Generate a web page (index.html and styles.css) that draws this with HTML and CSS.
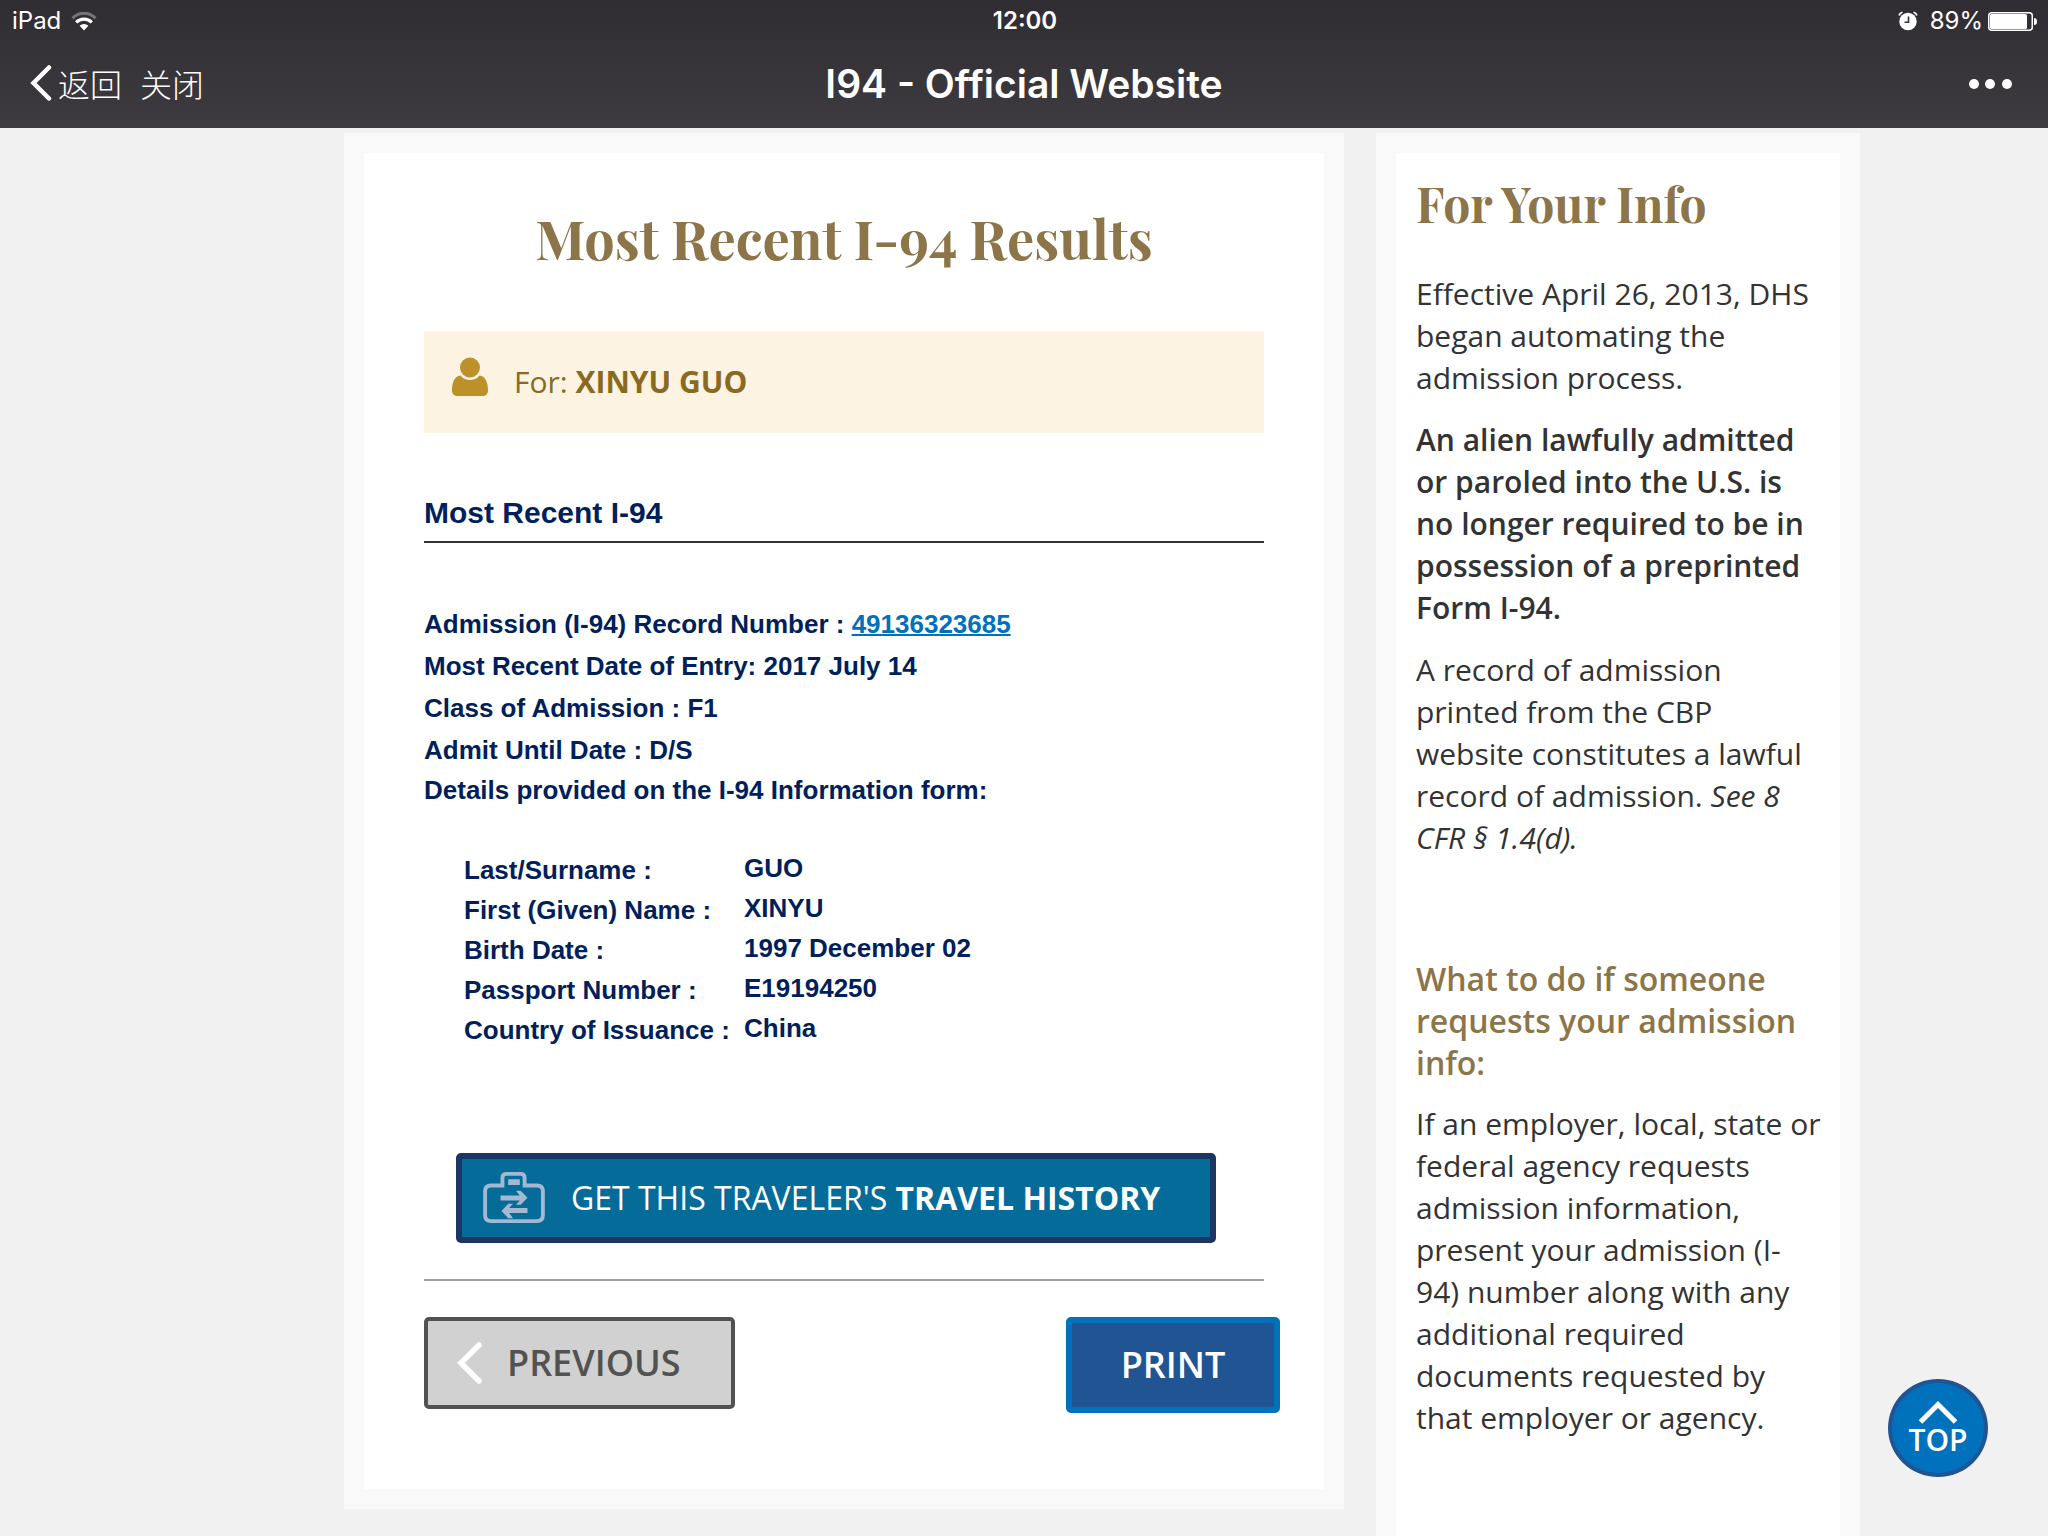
FILE: index.html
```html
<!DOCTYPE html>
<html lang="en">
<head>
<meta charset="utf-8">
<meta name="viewport" content="width=device-width, initial-scale=1">
<title>I94 - Official Website</title>
<link rel="stylesheet" href="styles.css">
</head>
<body>
<header class="topbar">
  <div class="status">
    <div class="status-left">
      <span>iPad</span>
      <svg class="wifi" viewBox="0 0 26 19" aria-hidden="true">
        <path d="M1.500 6.200A16 16 0 0 1 24.500 6.200" fill="none" stroke="#77757a" stroke-width="3"/>
        <path d="M5.200 10.300A11 11 0 0 1 20.800 10.300" fill="none" stroke="#fff" stroke-width="3.200"/>
        <path d="M13 18.500L8.600 13.700A6.500 6.500 0 0 1 17.400 13.700Z" fill="#fff"/>
      </svg>
    </div>
    <span class="clock">12:00</span>
    <div class="status-right">
      <svg class="alarm" viewBox="0 0 20 20" aria-hidden="true">
        <circle cx="10" cy="10.500" r="8.700" fill="#fff"/>
        <path d="M1 4.500A5 5 0 0 1 4.500 1.200M19 4.500A5 5 0 0 0 15.500 1.200" fill="none" stroke="#fff" stroke-width="1.600"/>
        <path d="M10.500 5.500V11.200H6.500" fill="none" stroke="#313035" stroke-width="1.600"/>
      </svg>
      <span>89%</span>
      <svg class="battery" viewBox="0 0 50 20" aria-hidden="true">
        <rect x="0.750" y="1.750" width="43.500" height="17.500" rx="3" fill="none" stroke="#fff" stroke-width="1.500"/>
        <rect x="2" y="3" width="37" height="15" rx="1.500" fill="#fff"/>
        <path d="M46 7a3 3.500 0 0 1 0 7z" fill="#fff"/>
      </svg>
    </div>
  </div>
  <div class="nav">
    <div class="nav-left">
      <button class="nav-button" type="button">
        <svg class="back-icon" viewBox="0 0 22 36" aria-hidden="true"><path d="M19 2.500L3.500 18L19 33.500" fill="none" stroke="#fff" stroke-width="4.500" stroke-linecap="round" stroke-linejoin="miter"/></svg>
        <span lang="zh">返回</span>
      </button>
      <button class="nav-button" type="button" lang="zh">关闭</button>
    </div>
    <span class="nav-title">I94 - Official Website</span>
    <button class="nav-more" type="button" aria-label="More">
      <svg class="dots" viewBox="0 0 44 12" aria-hidden="true"><g fill="#fff"><circle cx="6" cy="6" r="5"/><circle cx="22" cy="6" r="5"/><circle cx="39" cy="6" r="5"/></g></svg>
    </button>
  </div>
</header>

<div class="page">
  <main class="panel panel-main">
    <div class="results">
      <h1 class="results-title">Most Recent I-94 Results</h1>
      <div class="traveler">
        <svg class="person" viewBox="0 0 36 40" aria-hidden="true"><g fill="#bc9129"><ellipse cx="18" cy="10.500" rx="10" ry="10"/><path d="M8.500 18.500C11 22 14.500 23 18 23s7-1 9.500-4.500C33 19 36 25 36 33c0 4-2 6-6 6H6c-4 0-6-2-6-6 0-8 3-14 8.500-14.500Z"/></g></svg>
        <span>For: <strong>XINYU GUO</strong></span>
      </div>
      <h2 class="section-title">Most Recent I-94</h2>
      <div class="record">
        <p>Admission (I-94) Record Number : <a href="#record">49136323685</a></p>
        <p>Most Recent Date of Entry: 2017 July 14</p>
        <p>Class of Admission : F1</p>
        <p>Admit Until Date : D/S</p>
        <p class="record-note">Details provided on the I-94 Information form:</p>
      </div>
      <table class="details">
        <tbody>
          <tr><th scope="row">Last/Surname :</th><td>GUO</td></tr>
          <tr><th scope="row">First (Given) Name :</th><td>XINYU</td></tr>
          <tr><th scope="row">Birth Date :</th><td>1997 December 02</td></tr>
          <tr><th scope="row">Passport Number :</th><td>E19194250</td></tr>
          <tr><th scope="row">Country of Issuance :</th><td>China</td></tr>
        </tbody>
      </table>
      <button class="button button-history" type="button">
        <svg class="suitcase" viewBox="0 0 64 54" aria-hidden="true">
          <path d="M20 14V6Q20 2 24 2H39Q43 2 43 6V14H56Q62 14 62 20V45Q62 51 56 51H8Q2 51 2 45V20Q2 14 8 14Z" fill="none" stroke="#a3b9d1" stroke-width="4"/>
          <path d="M26 7.500H38V13.500H26ZM18 24.500H38L34 19.500H39L46 26.800L39 34H34L38 29.500H18ZM46 37.500H27L31 33H26L19 40.500L26 48H31L27 42.500H46Z" fill="#a3b9d1"/>
        </svg>
        <span>GET THIS TRAVELER'S <strong>TRAVEL HISTORY</strong></span>
      </button>
      <hr class="divider">
      <div class="actions">
        <button class="button button-previous" type="button">
          <svg class="prev-icon" viewBox="0 0 26 42" aria-hidden="true"><path d="M22 3L4 21L22 39" fill="none" stroke="#fff" stroke-width="5.500" stroke-linecap="round"/></svg>
          <span>PREVIOUS</span>
        </button>
        <button class="button button-print" type="button">PRINT</button>
      </div>
    </div>
  </main>

  <aside class="panel">
    <div class="info">
      <h2 class="info-title">For Your Info</h2>
      <p>Effective April 26, 2013, DHS began automating the admission process.</p>
      <p class="info-strong">An alien lawfully admitted or paroled into the U.S. is no longer required to be in possession of a preprinted Form I-94.</p>
      <p>A record of admission printed from the CBP website constitutes a lawful record of admission. <em>See 8 CFR § 1.4(d).</em></p>
      <h3 class="info-subtitle">What to do if someone requests your admission info:</h3>
      <p>If an employer, local, state or federal agency requests admission information, present your admission (I-94) number along with any additional required documents requested by that employer or agency.</p>
    </div>
  </aside>
</div>

<a class="to-top" href="#">
  <svg class="up-icon" viewBox="0 0 40 24" aria-hidden="true"><path d="M2.500 22L20 4.500L37.500 22" fill="none" stroke="#fff" stroke-width="5"/></svg>
  <span>TOP</span>
</a>
</body>
</html>
```
FILE: styles.css
```css
* {
  box-sizing: border-box;
}

body {
  display: flex;
  flex-direction: column;
  min-height: 100vh;
  margin: 0;
  background: #f1f1f1;
  color: #333;
  font: 30px/42px "Open Sans", sans-serif;
}

h1, h2, h3, p {
  margin: 0;
}

button {
  padding: 0;
  border: 0;
  background: none;
  color: inherit;
  font: inherit;
  cursor: pointer;
}

svg {
  display: block;
  flex: none;
}

/* Top bar */
.topbar {
  height: 128px;
  background: linear-gradient(#2f2d32, #3d3b40);
  color: #fff;
  font-family: Inter, "Noto Sans CJK SC", sans-serif;
}

.status,
.nav {
  display: grid;
  grid-template-columns: 1fr auto 1fr;
  align-items: center;
}

.status {
  height: 42px;
  padding: 0 10px 0 12px;
  font-size: 24px;
}

.status-left,
.status-right,
.nav-left {
  display: flex;
  align-items: center;
}

.status-left {
  gap: 10px;
}

.status-right {
  justify-content: flex-end;
}

.clock {
  font-weight: 600;
}

.wifi {
  width: 26px;
  height: 19px;
}

.alarm {
  width: 20px;
  height: 20px;
  margin-right: 12px;
}

.battery {
  width: 50px;
  height: 20px;
  margin-left: 5px;
}

.nav {
  height: 84px;
  padding: 0 30px;
}

.nav-left {
  gap: 18px;
}

.nav-button {
  display: flex;
  align-items: center;
  gap: 6px;
  padding-bottom: 2px;
  font: 300 32px/42px "Noto Sans CJK SC", sans-serif;
}

.nav-more {
  justify-self: end;
  padding-right: 6px;
}

.nav-title {
  font-size: 39px;
  font-weight: 600;
}

.back-icon {
  width: 22px;
  height: 36px;
}

.dots {
  width: 44px;
  height: 12px;
}

/* Page columns */
.page {
  display: grid;
  flex: 1;
  grid-template-columns: 1000fr 484fr;
  gap: 32px;
  padding: 5px 188px 0 344px;
}

.panel {
  display: flex;
  flex-direction: column;
  padding: 20px 20px 0;
  background: #f9f9f9;
}

.panel-main {
  align-self: start;
  padding-bottom: 20px;
}

/* Results */
.results {
  padding: 49px 60px 76px;
  background: #fff;
}

.results-title,
.info-title,
.info-subtitle {
  color: #8c7549;
}

.results-title {
  margin-bottom: 57px;
  font: 700 54px/72px "Playfair Display", "Liberation Serif", serif;
  text-align: center;
}

.traveler {
  display: flex;
  align-items: center;
  gap: 26px;
  min-height: 102px;
  padding: 0 28px;
  background: #fdf3e2;
  color: #8a6a1f;
}

.person {
  width: 36px;
  height: 40px;
  margin-bottom: 10px;
}

.section-title {
  margin: 59px 0 60px;
  padding-bottom: 7px;
  border-bottom: 2px solid #333;
  color: #001f5b;
  font: bold 30px/42px "Liberation Sans", Arial, sans-serif;
}

.record,
.details {
  color: #001f5b;
  font: bold 26px/42px "Liberation Sans", Arial, sans-serif;
}

.record a {
  color: #0071bc;
  text-decoration-thickness: 2px;
}

.record-note {
  line-height: 38px;
}

.details {
  margin: 40px 0 104px 40px;
  border-collapse: collapse;
  line-height: 38px;
}

.details th,
.details td {
  padding: 0;
  text-align: left;
  vertical-align: top;
}

.details th {
  width: 280px;
  padding-top: 2px;
}

.button {
  display: flex;
  align-items: center;
  border-style: solid;
  border-radius: 5px;
}

.button-history {
  gap: 26px;
  width: calc(100% - 80px);
  min-height: 90px;
  margin-left: 32px;
  padding: 0 21px;
  border-width: 6px;
  border-color: #1c3664;
  background: #056b99;
  color: #fff;
  font-size: 32px;
}

.suitcase {
  width: 62px;
  height: 52px;
}

.divider {
  margin: 36px 0;
  border: 0;
  border-top: 2px solid #9c9c9c;
}

.actions {
  display: flex;
  align-items: flex-start;
  justify-content: space-between;
  margin-right: -16px;
}

.button-previous,
.button-print {
  font-size: 36px;
  font-weight: 600;
}

.button-previous {
  gap: 24px;
  width: 311px;
  min-height: 92px;
  padding: 0 29px;
  border-width: 4px;
  border-color: #525252;
  background: #d1d1d1;
  color: #525252;
}

.prev-icon {
  width: 26px;
  height: 42px;
}

.button-print {
  justify-content: center;
  width: 214px;
  min-height: 96px;
  border-width: 6px;
  border-color: #0071bc;
  background: #205493;
  color: #fff;
}

/* Sidebar */
.info {
  flex: 1;
  padding: 20px 18px 0 20px;
  background: #fff;
}

.info p + p {
  margin-top: 20px;
}

.info-title {
  margin-bottom: 40px;
  font: 700 48px/60px "Playfair Display", "Liberation Serif", serif;
}

.info-strong {
  font-weight: 600;
}

.info-subtitle {
  margin: 99px 0 19px;
  font-size: 32px;
  font-weight: 600;
}

/* Back to top */
.to-top {
  position: fixed;
  right: 60px;
  bottom: 59px;
  display: flex;
  flex-direction: column;
  align-items: center;
  justify-content: center;
  width: 100px;
  height: 98px;
  border: 4px solid #205493;
  border-radius: 50%;
  background: #0071bc;
  color: #fff;
  font-size: 30px;
  font-weight: 600;
  line-height: 32px;
  text-decoration: none;
}

.up-icon {
  width: 40px;
  height: 24px;
}
```
